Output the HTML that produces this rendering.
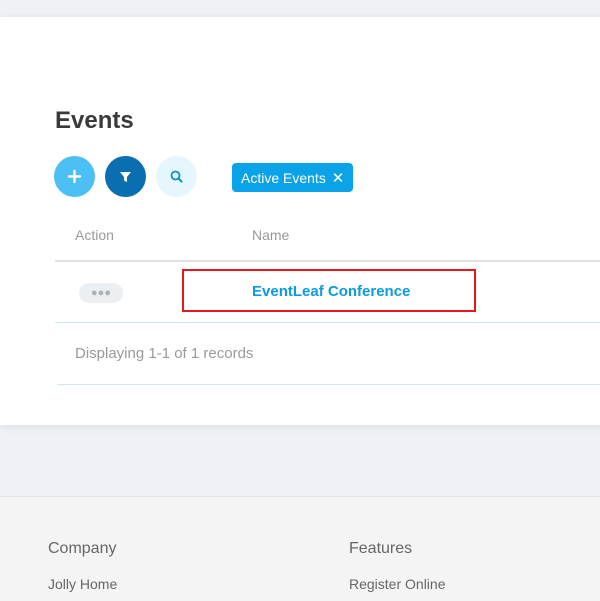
<!DOCTYPE html>
<html><head><style>
body{margin:0;width:600px;height:600px;background:#eef1f5;font-family:"Liberation Sans",sans-serif;position:relative;overflow:hidden}
.card{position:absolute;left:0;top:17px;width:620px;height:408px;background:#fff;box-shadow:0 2px 8px rgba(0,0,0,0.08)}
.a{position:absolute}
.btn{position:absolute;top:156px;width:41px;height:41px;border-radius:50%}
.footer{position:absolute;left:0;top:496px;width:600px;height:104px;background:#f4f4f4;border-top:1px solid #e2e4e8}
</style></head><body>
<div class="card"></div>
<div class="a" style="left:55px;top:107px;font-size:24px;font-weight:bold;color:#3a3a3a">Events</div>
<div class="btn" style="left:54px;background:#4cc0f5"><svg width="41" height="41"><path d="M20.5 15v11M15 20.5h11" stroke="#fff" stroke-width="2.4" stroke-linecap="round"/></svg></div>
<div class="btn" style="left:105px;background:#0a6fb0"><svg width="41" height="41"><path d="M15 16h11l-4 5v5l-3-1.5v-3.5z" fill="#fff"/></svg></div>
<div class="btn" style="left:156px;background:#e6f6fd"><svg width="41" height="41"><circle cx="19.5" cy="19.5" r="4" fill="none" stroke="#0a8fd0" stroke-width="1.8"/><path d="M22.5 22.5l3 3" stroke="#0a8fd0" stroke-width="2" stroke-linecap="round"/></svg></div>
<div class="a" style="left:232px;top:163px;width:121px;height:29px;background:#0aa3e8;border-radius:4px;color:#fff;font-size:14px;line-height:30px;padding-left:9px;box-sizing:border-box">Active Events <span style="font-size:15px;margin-left:2px">✕</span></div>
<div class="a" style="left:75px;top:227px;font-size:14px;color:#999">Action</div>
<div class="a" style="left:252px;top:227px;font-size:14px;color:#999">Name</div>
<div class="a" style="left:55px;top:260px;width:545px;height:2px;background:#e2e2e2"></div>
<div class="a" style="left:79px;top:283px;width:44px;height:20px;border-radius:10px;background:#eceff2;text-align:center;line-height:20px;font-size:11px;color:#a9b0b8;letter-spacing:0px">●●●</div>
<div class="a" style="left:182px;top:269px;width:290px;height:39px;border:2px solid #e8161a"></div>
<div class="a" style="left:252px;top:283px;font-size:15px;font-weight:bold;color:#0a9be0">EventLeaf Conference</div>
<div class="a" style="left:55px;top:322px;width:545px;height:1px;background:#cde9ee"></div>
<div class="a" style="left:75px;top:345px;font-size:15px;color:#999">Displaying 1-1 of 1 records</div>
<div class="a" style="left:57px;top:384px;width:543px;height:1px;background:#cde9ee"></div>
<div class="footer"></div>
<div class="a" style="left:48px;top:540px;font-size:16px;color:#666">Company</div>
<div class="a" style="left:349px;top:540px;font-size:16px;color:#666">Features</div>
<div class="a" style="left:48px;top:576px;font-size:14px;color:#666">Jolly Home</div>
<div class="a" style="left:349px;top:576px;font-size:14px;color:#666">Register Online</div>
</body></html>
